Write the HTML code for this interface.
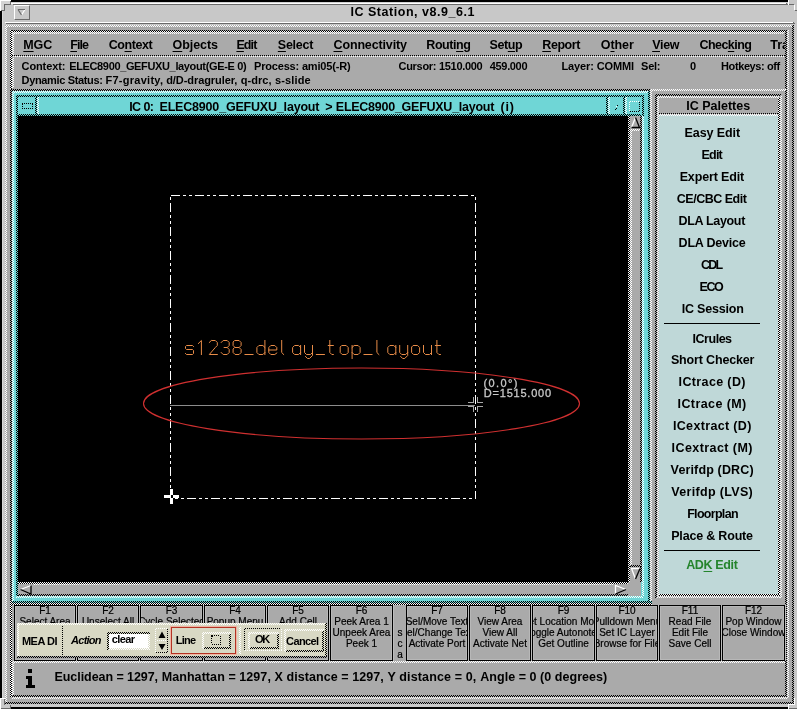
<!DOCTYPE html>
<html><head><meta charset="utf-8">
<style>
html,body{margin:0;padding:0;}
body{width:797px;height:709px;position:relative;overflow:hidden;background:#aaaaaa;font-family:"Liberation Sans",sans-serif;}
div{position:absolute;box-sizing:border-box;}
.t{white-space:nowrap;}
.fk{-webkit-text-stroke:0.2px #000;position:absolute;left:-20px;right:-20px;text-align:center;white-space:nowrap;font-size:10px;line-height:11px;color:#000;}
u{text-decoration:underline;text-underline-offset:2px;}
</style></head><body><div style="left:0;top:0;width:797px;height:709px;overflow:hidden;will-change:transform;">
<div style="left:0px;top:0px;width:797px;height:26px;background:#c8c8c8;"></div>
<div style="left:794px;top:0px;width:3px;height:709px;background:#c8c8c8;"></div>
<div style="left:2px;top:0px;width:3px;height:709px;background:#c8c8c8;"></div>
<div style="left:0px;top:11px;width:2px;height:687px;background:#000;"></div>
<div style="left:2px;top:11px;width:1px;height:687px;background:#d8d8d8;"></div>
<div style="left:11px;top:0px;width:777px;height:2px;background:#000;"></div>
<div style="left:0px;top:0px;width:11px;height:11px;background:#c8c8c8;"></div>
<div style="left:1px;top:1px;width:10px;height:3px;background:#d4d4d4;"></div>
<div style="left:1px;top:1px;width:3px;height:10px;background:#d4d4d4;"></div>
<div style="left:0px;top:0px;width:11px;height:1px;background:#fff;"></div>
<div style="left:0px;top:0px;width:1px;height:11px;background:#fff;"></div>
<div style="left:10px;top:1px;width:1px;height:4px;background:#6a6a6a;"></div>
<div style="left:4px;top:4px;width:7px;height:1px;background:#6a6a6a;"></div>
<div style="left:4px;top:4px;width:1px;height:7px;background:#6a6a6a;"></div>
<div style="left:1px;top:10px;width:4px;height:1px;background:#6a6a6a;"></div>
<div style="left:788px;top:0px;width:9px;height:10px;background:#c8c8c8;"></div>
<div style="left:788px;top:0px;width:1px;height:5px;background:#fff;"></div>
<div style="left:789px;top:4px;width:5px;height:1px;background:#6a6a6a;"></div>
<div style="left:794px;top:5px;width:1px;height:5px;background:#fff;"></div>
<div style="left:795px;top:10px;width:2px;height:1px;background:#6a6a6a;"></div>
<div style="left:11px;top:2px;width:777px;height:1px;background:#d4d4d4;"></div>
<div style="left:11px;top:3px;width:775px;height:1px;background:#fff;"></div>
<div style="left:13px;top:4px;width:775px;height:1px;background:#6a6a6a;"></div>
<div style="left:786px;top:3px;width:1px;height:1px;background:#6a6a6a;"></div>
<div style="left:5px;top:22px;width:788px;height:1px;background:#fff;"></div>
<div style="left:6px;top:23px;width:789px;height:1px;background:#6a6a6a;"></div>
<div style="left:793px;top:22px;width:1px;height:1px;background:#6a6a6a;"></div>
<div class="t" style="left:350.40px;top:1.67px;font-size:12.5px;line-height:20px;font-weight:bold;font-style:normal;color:#000;font-family:'Liberation Sans';letter-spacing:0.538px;">IC Station, v8.9_6.1</div>
<div style="left:14px;top:5px;width:16px;height:15px;background:#c8c8c8;border-left:1px solid #fff;border-top:1px solid #fff;border-right:1px solid #6a6a6a;border-bottom:1px solid #6a6a6a;"></div>
<svg style="position:absolute;left:16px;top:8px" width="12" height="10"><path d="M9 1.5 L5.5 7" stroke="#fff" stroke-width="1.2"/><path d="M2 1.5 H9 M2 1.5 L5.5 7" fill="none" stroke="#6a6a6a" stroke-width="1.2"/></svg>
<div style="left:5px;top:25px;width:787px;height:2px;background:repeating-conic-gradient(#fff 0 25%,#aaaaaa 0 50%) 0 0/2px 2px;"></div>
<div style="left:5px;top:25px;width:2px;height:679px;background:repeating-conic-gradient(#fff 0 25%,#aaaaaa 0 50%) 0 0/2px 2px;"></div>
<div style="left:792px;top:25px;width:2px;height:679px;background:repeating-conic-gradient(#000 0 25%,#aaaaaa 0 50%) 0 0/2px 2px;"></div>
<div style="left:5px;top:702px;width:789px;height:2px;background:repeating-conic-gradient(#000 0 25%,#aaaaaa 0 50%) 0 0/2px 2px;"></div>
<div style="left:5px;top:704px;width:792px;height:3px;background:#c8c8c8;"></div>
<div style="left:11px;top:707px;width:777px;height:2px;background:#000;"></div>
<div style="left:0px;top:698px;width:5px;height:11px;background:#c8c8c8;"></div>
<div style="left:0px;top:704px;width:11px;height:5px;background:#c8c8c8;"></div>
<div style="left:0px;top:698px;width:5px;height:1px;background:#fff;"></div>
<div style="left:0px;top:698px;width:1px;height:11px;background:#fff;"></div>
<div style="left:4px;top:699px;width:1px;height:6px;background:#6a6a6a;"></div>
<div style="left:10px;top:705px;width:1px;height:4px;background:#6a6a6a;"></div>
<div style="left:1px;top:708px;width:10px;height:1px;background:#6a6a6a;"></div>
<div style="left:788px;top:704px;width:9px;height:5px;background:#c8c8c8;"></div>
<div style="left:794px;top:698px;width:1px;height:7px;background:#fff;"></div>
<div style="left:788px;top:704px;width:7px;height:1px;background:#fff;"></div>
<div style="left:788px;top:704px;width:1px;height:5px;background:#fff;"></div>
<div style="left:789px;top:708px;width:8px;height:1px;background:#6a6a6a;"></div>
<div style="left:785px;top:30px;width:2px;height:668px;background:repeating-conic-gradient(#000 0 25%,#aaaaaa 0 50%) 0 0/2px 2px;"></div>
<div style="left:787px;top:30px;width:2px;height:668px;background:repeating-conic-gradient(#fff 0 25%,#aaaaaa 0 50%) 0 0/2px 2px;"></div>
<div style="left:10px;top:30px;width:776px;height:1px;background:linear-gradient(to right,#000 50%,#aaa 50%) 0 0/2px 1px;"></div>
<div style="left:10px;top:31px;width:776px;height:1px;background:linear-gradient(to right,#fff 50%,#000 50%) 0 0/2px 1px;"></div>
<div style="left:12px;top:32px;width:772px;height:2px;background:repeating-conic-gradient(#fff 0 25%,#aaaaaa 0 50%) 0 0/2px 2px;"></div>
<div style="left:10px;top:30px;width:2px;height:28px;background:repeating-conic-gradient(#000 0 25%,#fff 0 50%) 0 0/2px 2px;"></div>
<div style="left:12px;top:32px;width:2px;height:24px;background:repeating-conic-gradient(#fff 0 25%,#aaaaaa 0 50%) 0 0/2px 2px;"></div>
<div style="left:12px;top:55px;width:773px;height:1px;background:linear-gradient(to right,#000 50%,#aaa 50%) 0 0/2px 1px;"></div>
<div style="left:12px;top:56px;width:773px;height:1px;background:linear-gradient(to right,#aaa 50%,#fff 50%) 0 0/2px 1px;"></div>
<div class="t" style="left:23.30px;top:34.67px;font-size:12.5px;line-height:20px;font-weight:bold;font-style:normal;color:#000;font-family:'Liberation Sans';letter-spacing:-0.118px;"><u>M</u>GC</div>
<div class="t" style="left:70.30px;top:34.67px;font-size:12.5px;line-height:20px;font-weight:bold;font-style:normal;color:#000;font-family:'Liberation Sans';letter-spacing:-0.960px;"><u>F</u>ile</div>
<div class="t" style="left:108.70px;top:34.67px;font-size:12.5px;line-height:20px;font-weight:bold;font-style:normal;color:#000;font-family:'Liberation Sans';letter-spacing:-0.411px;">Co<u>n</u>text</div>
<div class="t" style="left:172.60px;top:34.67px;font-size:12.5px;line-height:20px;font-weight:bold;font-style:normal;color:#000;font-family:'Liberation Sans';letter-spacing:-0.083px;"><u>O</u>bjects</div>
<div class="t" style="left:236.40px;top:34.67px;font-size:12.5px;line-height:20px;font-weight:bold;font-style:normal;color:#000;font-family:'Liberation Sans';letter-spacing:-0.882px;"><u>E</u>dit</div>
<div class="t" style="left:277.80px;top:34.67px;font-size:12.5px;line-height:20px;font-weight:bold;font-style:normal;color:#000;font-family:'Liberation Sans';letter-spacing:-0.253px;"><u>S</u>elect</div>
<div class="t" style="left:333.50px;top:34.67px;font-size:12.5px;line-height:20px;font-weight:bold;font-style:normal;color:#000;font-family:'Liberation Sans';letter-spacing:-0.142px;"><u>C</u>onnectivity</div>
<div class="t" style="left:426.30px;top:34.67px;font-size:12.5px;line-height:20px;font-weight:bold;font-style:normal;color:#000;font-family:'Liberation Sans';letter-spacing:-0.428px;">Routi<u>n</u>g</div>
<div class="t" style="left:489.60px;top:34.67px;font-size:12.5px;line-height:20px;font-weight:bold;font-style:normal;color:#000;font-family:'Liberation Sans';letter-spacing:-0.422px;">Set<u>u</u>p</div>
<div class="t" style="left:542.30px;top:34.67px;font-size:12.5px;line-height:20px;font-weight:bold;font-style:normal;color:#000;font-family:'Liberation Sans';letter-spacing:-0.443px;"><u>R</u>eport</div>
<div class="t" style="left:600.80px;top:34.67px;font-size:12.5px;line-height:20px;font-weight:bold;font-style:normal;color:#000;font-family:'Liberation Sans';letter-spacing:-0.093px;">O<u>t</u>her</div>
<div class="t" style="left:652.20px;top:34.67px;font-size:12.5px;line-height:20px;font-weight:bold;font-style:normal;color:#000;font-family:'Liberation Sans';letter-spacing:-0.312px;"><u>V</u>iew</div>
<div class="t" style="left:699.40px;top:34.67px;font-size:12.5px;line-height:20px;font-weight:bold;font-style:normal;color:#000;font-family:'Liberation Sans';letter-spacing:-0.532px;">Chec<u>k</u>ing</div>
<div style="left:770px;top:34px;width:15px;height:20px;overflow:hidden;">
<div class="t" style="left:0.30px;top:0.67px;font-size:12.5px;line-height:20px;font-weight:bold;font-style:normal;color:#000;font-family:'Liberation Sans';letter-spacing:0.000px;">Tra</div>
</div>
<div style="left:10px;top:58px;width:2px;height:32px;background:repeating-conic-gradient(#000 0 25%,#fff 0 50%) 0 0/2px 2px;"></div>
<div style="left:12px;top:58px;width:2px;height:30px;background:repeating-conic-gradient(#fff 0 25%,#aaaaaa 0 50%) 0 0/2px 2px;"></div>
<div class="t" style="left:21.60px;top:56.19px;font-size:11px;line-height:20px;font-weight:bold;font-style:normal;color:#000;font-family:'Liberation Sans';letter-spacing:-0.121px;">Context:</div>
<div class="t" style="left:69.20px;top:56.19px;font-size:11px;line-height:20px;font-weight:bold;font-style:normal;color:#000;font-family:'Liberation Sans';letter-spacing:-0.355px;">ELEC8900_GEFUXU_layout(GE-E 0)</div>
<div class="t" style="left:254.00px;top:56.19px;font-size:11px;line-height:20px;font-weight:bold;font-style:normal;color:#000;font-family:'Liberation Sans';letter-spacing:-0.182px;">Process: ami05(-R)</div>
<div class="t" style="left:398.50px;top:56.19px;font-size:11px;line-height:20px;font-weight:bold;font-style:normal;color:#000;font-family:'Liberation Sans';letter-spacing:-0.296px;">Cursor: 1510.000</div>
<div class="t" style="left:489.80px;top:56.19px;font-size:11px;line-height:20px;font-weight:bold;font-style:normal;color:#000;font-family:'Liberation Sans';letter-spacing:-0.341px;">459.000</div>
<div class="t" style="left:561.50px;top:56.19px;font-size:11px;line-height:20px;font-weight:bold;font-style:normal;color:#000;font-family:'Liberation Sans';letter-spacing:-0.127px;">Layer: COMMI</div>
<div class="t" style="left:641.10px;top:56.19px;font-size:11px;line-height:20px;font-weight:bold;font-style:normal;color:#000;font-family:'Liberation Sans';letter-spacing:-0.304px;">Sel:</div>
<div class="t" style="left:690.00px;top:56.19px;font-size:11px;line-height:20px;font-weight:bold;font-style:normal;color:#000;font-family:'Liberation Sans';letter-spacing:0.000px;">0</div>
<div class="t" style="left:721.00px;top:56.19px;font-size:11px;line-height:20px;font-weight:bold;font-style:normal;color:#000;font-family:'Liberation Sans';letter-spacing:-0.391px;">Hotkeys: off</div>
<div class="t" style="left:21.60px;top:70.19px;font-size:11px;line-height:20px;font-weight:bold;font-style:normal;color:#000;font-family:'Liberation Sans';letter-spacing:-0.352px;">Dynamic Status:</div>
<div class="t" style="left:105.50px;top:70.19px;font-size:11px;line-height:20px;font-weight:bold;font-style:normal;color:#000;font-family:'Liberation Sans';letter-spacing:0.264px;">F7-gravity,</div>
<div class="t" style="left:166.20px;top:70.19px;font-size:11px;line-height:20px;font-weight:bold;font-style:normal;color:#000;font-family:'Liberation Sans';letter-spacing:-0.074px;">d/D-dragruler,</div>
<div class="t" style="left:240.70px;top:70.19px;font-size:11px;line-height:20px;font-weight:bold;font-style:normal;color:#000;font-family:'Liberation Sans';letter-spacing:0.040px;">q-drc,</div>
<div class="t" style="left:274.90px;top:70.19px;font-size:11px;line-height:20px;font-weight:bold;font-style:normal;color:#000;font-family:'Liberation Sans';letter-spacing:0.162px;">s-slide</div>
<div style="left:10px;top:89px;width:640px;height:2px;background:repeating-conic-gradient(#000 0 25%,#aaaaaa 0 50%) 0 0/2px 2px;"></div>
<div style="left:650px;top:89px;width:136px;height:2px;background:repeating-conic-gradient(#fff 0 25%,#aaaaaa 0 50%) 0 0/2px 2px;"></div>
<div style="left:10px;top:91px;width:642px;height:512px;background:#6fd6d6;"></div>
<div style="left:10px;top:91px;width:2px;height:512px;background:repeating-conic-gradient(#000 0 25%,#aaaaaa 0 50%) 0 0/2px 2px;"></div>
<div style="left:12px;top:91px;width:638px;height:2px;background:repeating-conic-gradient(#fff 0 25%,#6fd6d6 0 50%) 0 0/2px 2px;"></div>
<div style="left:12px;top:91px;width:2px;height:510px;background:repeating-conic-gradient(#fff 0 25%,#6fd6d6 0 50%) 0 0/2px 2px;"></div>
<div style="left:648px;top:91px;width:2px;height:512px;background:repeating-conic-gradient(#000 0 25%,#6fd6d6 0 50%) 0 0/2px 2px;"></div>
<div style="left:650px;top:91px;width:2px;height:512px;background:repeating-conic-gradient(#fff 0 25%,#aaaaaa 0 50%) 0 0/2px 2px;"></div>
<div style="left:16px;top:95px;width:627px;height:2px;background:repeating-conic-gradient(#000 0 25%,#6fd6d6 0 50%) 0 0/2px 2px;"></div>
<div style="left:16px;top:95px;width:2px;height:502px;background:repeating-conic-gradient(#000 0 25%,#6fd6d6 0 50%) 0 0/2px 2px;"></div>
<div style="left:642px;top:95px;width:2px;height:502px;background:repeating-conic-gradient(#fff 0 25%,#6fd6d6 0 50%) 0 0/2px 2px;"></div>
<div style="left:18px;top:114px;width:623px;height:2px;background:repeating-conic-gradient(#000 0 25%,#6fd6d6 0 50%) 0 0/2px 2px;"></div>
<div style="left:35px;top:97px;width:2px;height:17px;background:repeating-conic-gradient(#000 0 25%,#6fd6d6 0 50%) 0 0/2px 2px;"></div>
<div style="left:37px;top:97px;width:2px;height:17px;background:repeating-conic-gradient(#fff 0 25%,#6fd6d6 0 50%) 0 0/2px 2px;"></div>
<div style="left:22px;top:103px;width:11px;height:6px;border:1px dotted #000;"></div>
<div class="t" style="left:129.20px;top:96.67px;font-size:12.5px;line-height:20px;font-weight:bold;font-style:normal;color:#000;font-family:'Liberation Sans';letter-spacing:-0.581px;">IC 0:</div>
<div class="t" style="left:159.50px;top:96.67px;font-size:12.5px;line-height:20px;font-weight:bold;font-style:normal;color:#000;font-family:'Liberation Sans';letter-spacing:-0.190px;">ELEC8900_GEFUXU_layout</div>
<div class="t" style="left:325.30px;top:96.67px;font-size:12.5px;line-height:20px;font-weight:bold;font-style:normal;color:#000;font-family:'Liberation Sans';letter-spacing:0.000px;">&gt;</div>
<div class="t" style="left:335.80px;top:96.67px;font-size:12.5px;line-height:20px;font-weight:bold;font-style:normal;color:#000;font-family:'Liberation Sans';letter-spacing:-0.256px;">ELEC8900_GEFUXU_layout</div>
<div class="t" style="left:500.50px;top:96.67px;font-size:12.5px;line-height:20px;font-weight:bold;font-style:normal;color:#000;font-family:'Liberation Sans';letter-spacing:0.782px;">(i)</div>
<div style="left:606px;top:97px;width:2px;height:17px;background:repeating-conic-gradient(#000 0 25%,#6fd6d6 0 50%) 0 0/2px 2px;"></div>
<div style="left:608px;top:97px;width:2px;height:17px;background:repeating-conic-gradient(#fff 0 25%,#6fd6d6 0 50%) 0 0/2px 2px;"></div>
<div style="left:623px;top:97px;width:2px;height:17px;background:repeating-conic-gradient(#000 0 25%,#6fd6d6 0 50%) 0 0/2px 2px;"></div>
<div style="left:625px;top:97px;width:2px;height:17px;background:repeating-conic-gradient(#fff 0 25%,#6fd6d6 0 50%) 0 0/2px 2px;"></div>
<div style="left:642px;top:95px;width:2px;height:21px;background:repeating-conic-gradient(#000 0 25%,#6fd6d6 0 50%) 0 0/2px 2px;"></div>
<div style="left:617px;top:105px;width:1px;height:1px;background:#000;"></div>
<div style="left:616px;top:106px;width:1px;height:1px;background:#fff;"></div>
<div style="left:616px;top:108px;width:1px;height:1px;background:#000;"></div>
<div style="left:615px;top:109px;width:1px;height:1px;background:#000;"></div>
<div style="left:629px;top:101px;width:11px;height:1px;background:repeating-conic-gradient(#fff 0 25%,#6fd6d6 0 50%) 0 0/2px 2px;"></div>
<div style="left:629px;top:101px;width:1px;height:11px;background:repeating-conic-gradient(#fff 0 25%,#6fd6d6 0 50%) 0 0/2px 2px;"></div>
<div style="left:639px;top:101px;width:1px;height:11px;background:repeating-conic-gradient(#000 0 25%,#6fd6d6 0 50%) 0 0/2px 2px;"></div>
<div style="left:629px;top:111px;width:11px;height:1px;background:repeating-conic-gradient(#000 0 25%,#6fd6d6 0 50%) 0 0/2px 2px;"></div>
<div style="left:18px;top:116px;width:610px;height:466px;background:#000;"></div>
<div style="left:628px;top:116px;width:14px;height:466px;background:#aaaaaa;"></div>
<div style="left:628px;top:116px;width:2px;height:466px;background:repeating-conic-gradient(#000 0 25%,#fff 0 50%) 0 0/2px 2px;"></div>
<div style="left:630px;top:129px;width:2px;height:438px;background:repeating-conic-gradient(#fff 0 25%,#aaaaaa 0 50%) 0 0/2px 2px;"></div>
<div style="left:630px;top:129px;width:11px;height:2px;background:repeating-conic-gradient(#fff 0 25%,#aaaaaa 0 50%) 0 0/2px 2px;"></div>
<div style="left:640px;top:116px;width:2px;height:466px;background:repeating-conic-gradient(#000 0 25%,#aaaaaa 0 50%) 0 0/2px 2px;"></div>
<div style="left:630px;top:565px;width:11px;height:2px;background:repeating-conic-gradient(#000 0 25%,#aaaaaa 0 50%) 0 0/2px 2px;"></div>
<svg style="position:absolute;left:630px;top:116px" width="12" height="14"><path d="M5.5 1.5 L1.5 11.5" stroke="#fff" stroke-width="1.3"/><path d="M5.5 1.5 L9.5 11.5 H1.5" fill="none" stroke="#000" stroke-width="1.3"/></svg>
<svg style="position:absolute;left:630px;top:567px" width="12" height="14"><path d="M10 1.5 H1.5 L5.5 12" fill="none" stroke="#fff" stroke-width="1.3"/><path d="M10 1.5 L5.5 12" stroke="#000" stroke-width="1.3"/></svg>
<div style="left:18px;top:582px;width:623px;height:14px;background:#aaaaaa;"></div>
<div style="left:18px;top:582px;width:610px;height:2px;background:repeating-conic-gradient(#000 0 25%,#fff 0 50%) 0 0/2px 2px;"></div>
<div style="left:33px;top:584px;width:580px;height:1px;background:repeating-conic-gradient(#fff 0 25%,#aaaaaa 0 50%) 0 0/2px 2px;"></div>
<div style="left:18px;top:594px;width:610px;height:2px;background:repeating-conic-gradient(#000 0 25%,#aaaaaa 0 50%) 0 0/2px 2px;"></div>
<div style="left:16px;top:596px;width:627px;height:2px;background:repeating-conic-gradient(#fff 0 25%,#6fd6d6 0 50%) 0 0/2px 2px;"></div>
<svg style="position:absolute;left:19px;top:584px" width="14" height="12"><path d="M1.5 5.5 L12 1.5" stroke="#fff" stroke-width="1.3"/><path d="M1.5 5.5 L12 10 V1.5" fill="none" stroke="#000" stroke-width="1.3"/></svg>
<svg style="position:absolute;left:614px;top:584px" width="14" height="12"><path d="M1.5 10 V1.5 L12 5.5" fill="none" stroke="#fff" stroke-width="1.3"/><path d="M12 5.5 L1.5 10" stroke="#000" stroke-width="1.3"/></svg>
<svg style="position:absolute;left:0;top:0" width="797" height="709">
<rect x="170.5" y="195.5" width="305" height="303" fill="none" stroke="#fff" stroke-width="1" stroke-dasharray="9 3 3 3 3 3" shape-rendering="crispEdges"/>
<ellipse cx="361.5" cy="403.5" rx="218" ry="35.5" fill="none" stroke="#d03030" stroke-width="1.1"/>
<line x1="170" y1="405.5" x2="475" y2="405.5" stroke="#8c8c8c" stroke-width="1" shape-rendering="crispEdges"/>
<g stroke="#a8a8a8" stroke-width="1" fill="none" shape-rendering="crispEdges">
<path d="M468 402.5 H473.5 V397 M477.5 397 V402.5 H483 M468 406.5 H473.5 V412 M477.5 412 V406.5 H483"/>
</g>
<g fill="#fff">
<rect x="164" y="495" width="6" height="3"/><rect x="173" y="495" width="6" height="3"/>
<rect x="170" y="489" width="3" height="6"/><rect x="170" y="498" width="3" height="6"/>
</g>
</svg>
<svg style="position:absolute;left:0;top:0" width="797" height="709"><g fill="none" stroke="#e88c48" stroke-width="1.0" stroke-linejoin="round" stroke-linecap="square"><path transform="translate(185.50 340.5)" d="M8 6 L7 5 H1 L0 6 V8 L1 9 H7 L8 10 V13 L7 14 H1 L0 13"/><path transform="translate(197.40 340.5)" d="M1 3 L4 0 V14"/><path transform="translate(209.30 340.5)" d="M0 2 L2 0 H6 L8 2 V5 L6 7 L0 14 H8"/><path transform="translate(221.20 340.5)" d="M0 2 L2 0 H6 L8 2 V5 L6 7 H3 M6 7 L8 9 V12 L6 14 H2 L0 12"/><path transform="translate(233.10 340.5)" d="M2 0 H6 L8 2 V5 L6 7 H2 L0 5 V2 Z M2 7 H6 L8 9 V12 L6 14 H2 L0 12 V9 Z"/><path transform="translate(245.00 340.5)" d="M0 14 H8"/><path transform="translate(256.90 340.5)" d="M8 0 V14 M8 7 L6 5 H2 L0 7 V12 L2 14 H6 L8 12"/><path transform="translate(268.80 340.5)" d="M0 9.5 H8 V7 L6 5 H2 L0 7 V12 L2 14 H6 L8 12.5"/><path transform="translate(280.70 340.5)" d="M1 0 V12 L3 14"/><path transform="translate(292.60 340.5)" d="M8 5 V14 M8 7 L6 5 H2 L0 7 V12 L2 14 H6 L8 12"/><path transform="translate(304.50 340.5)" d="M0 5 V12 L2 14 H6 L8 12 M8 5 V15 L5 18 H3 L1 16"/><path transform="translate(316.40 340.5)" d="M0 14 H8"/><path transform="translate(328.30 340.5)" d="M1.5 0 V12 L3.5 14 H5 M0 5 H5"/><path transform="translate(340.20 340.5)" d="M2 5 H6 L8 7 V12 L6 14 H2 L0 12 V7 Z"/><path transform="translate(352.10 340.5)" d="M0 5 V18 M0 7 L2 5 H6 L8 7 V12 L6 14 H2 L0 12"/><path transform="translate(364.00 340.5)" d="M0 14 H8"/><path transform="translate(375.90 340.5)" d="M1 0 V12 L3 14"/><path transform="translate(387.80 340.5)" d="M8 5 V14 M8 7 L6 5 H2 L0 7 V12 L2 14 H6 L8 12"/><path transform="translate(399.70 340.5)" d="M0 5 V12 L2 14 H6 L8 12 M8 5 V15 L5 18 H3 L1 16"/><path transform="translate(411.60 340.5)" d="M2 5 H6 L8 7 V12 L6 14 H2 L0 12 V7 Z"/><path transform="translate(423.50 340.5)" d="M0 5 V12 L2 14 H6 L8 12 M8 5 V14"/><path transform="translate(435.40 340.5)" d="M1.5 0 V12 L3.5 14 H5 M0 5 H5"/></g></svg>
<div class="t" style="left:483.50px;top:373.19px;font-size:11px;line-height:20px;font-weight:normal;font-style:normal;color:#c8c8c8;font-family:'Liberation Sans';letter-spacing:1.389px;-webkit-text-stroke:0.3px #c8c8c8;">(0.0&deg;)</div>
<div class="t" style="left:483.80px;top:383.19px;font-size:11px;line-height:20px;font-weight:normal;font-style:normal;color:#c8c8c8;font-family:'Liberation Sans';letter-spacing:0.786px;-webkit-text-stroke:0.3px #c8c8c8;">D=1515.000</div>
<div style="left:655px;top:94px;width:130px;height:506px;background:#aaaaaa;"></div>
<div style="left:655px;top:94px;width:126px;height:2px;background:repeating-conic-gradient(#000 0 25%,#aaaaaa 0 50%) 0 0/2px 2px;"></div>
<div style="left:655px;top:94px;width:2px;height:504px;background:repeating-conic-gradient(#000 0 25%,#aaaaaa 0 50%) 0 0/2px 2px;"></div>
<div style="left:657px;top:96px;width:122px;height:2px;background:repeating-conic-gradient(#fff 0 25%,#aaaaaa 0 50%) 0 0/2px 2px;"></div>
<div style="left:657px;top:96px;width:2px;height:500px;background:repeating-conic-gradient(#fff 0 25%,#aaaaaa 0 50%) 0 0/2px 2px;"></div>
<div style="left:659px;top:113px;width:119px;height:1px;background:linear-gradient(to right,#000 50%,#aaa 50%) 0 0/2px 1px;"></div>
<div style="left:659px;top:114px;width:119px;height:1px;background:linear-gradient(to right,#aaa 50%,#fff 50%) 0 0/2px 1px;"></div>
<div style="left:659px;top:115px;width:119px;height:1px;background:linear-gradient(to right,#fff 50%,#bfd8d8 50%) 0 0/2px 1px;"></div>
<div style="left:659px;top:116px;width:119px;height:478px;background:#bfd8d8;"></div>
<div style="left:778px;top:98px;width:2px;height:498px;background:repeating-conic-gradient(#000 0 25%,#fff 0 50%) 0 0/2px 2px;"></div>
<div style="left:659px;top:594px;width:121px;height:2px;background:repeating-conic-gradient(#000 0 25%,#fff 0 50%) 0 0/2px 2px;"></div>
<div style="left:657px;top:596px;width:123px;height:2px;background:repeating-conic-gradient(#fff 0 25%,#aaaaaa 0 50%) 0 0/2px 2px;"></div>
<div style="left:780px;top:96px;width:2px;height:502px;background:repeating-conic-gradient(#fff 0 25%,#aaaaaa 0 50%) 0 0/2px 2px;"></div>
<div class="t" style="left:686.30px;top:95.67px;font-size:12.5px;line-height:20px;font-weight:bold;font-style:normal;color:#000;font-family:'Liberation Sans';letter-spacing:-0.006px;">IC Palettes</div>
<div class="t" style="left:684.50px;top:122.67px;font-size:12.5px;line-height:20px;font-weight:bold;font-style:normal;color:#000;font-family:'Liberation Sans';letter-spacing:-0.076px;">Easy Edit</div>
<div class="t" style="left:701.60px;top:144.67px;font-size:12.5px;line-height:20px;font-weight:bold;font-style:normal;color:#000;font-family:'Liberation Sans';letter-spacing:-0.815px;">Edit</div>
<div class="t" style="left:679.70px;top:166.67px;font-size:12.5px;line-height:20px;font-weight:bold;font-style:normal;color:#000;font-family:'Liberation Sans';letter-spacing:-0.152px;">Expert Edit</div>
<div class="t" style="left:676.80px;top:188.67px;font-size:12.5px;line-height:20px;font-weight:bold;font-style:normal;color:#000;font-family:'Liberation Sans';letter-spacing:-0.494px;">CE/CBC Edit</div>
<div class="t" style="left:678.60px;top:210.67px;font-size:12.5px;line-height:20px;font-weight:bold;font-style:normal;color:#000;font-family:'Liberation Sans';letter-spacing:-0.330px;">DLA Layout</div>
<div class="t" style="left:678.60px;top:232.67px;font-size:12.5px;line-height:20px;font-weight:bold;font-style:normal;color:#000;font-family:'Liberation Sans';letter-spacing:-0.224px;">DLA Device</div>
<div class="t" style="left:701.10px;top:254.67px;font-size:12.5px;line-height:20px;font-weight:bold;font-style:normal;color:#000;font-family:'Liberation Sans';letter-spacing:-1.777px;">CDL</div>
<div class="t" style="left:699.60px;top:276.67px;font-size:12.5px;line-height:20px;font-weight:bold;font-style:normal;color:#000;font-family:'Liberation Sans';letter-spacing:-1.432px;">ECO</div>
<div class="t" style="left:681.70px;top:298.67px;font-size:12.5px;line-height:20px;font-weight:bold;font-style:normal;color:#000;font-family:'Liberation Sans';letter-spacing:-0.186px;">IC Session</div>
<div style="left:664px;top:323px;width:96px;height:1px;background:#000;"></div>
<div class="t" style="left:692.60px;top:328.67px;font-size:12.5px;line-height:20px;font-weight:bold;font-style:normal;color:#000;font-family:'Liberation Sans';letter-spacing:-0.487px;">ICrules</div>
<div class="t" style="left:670.90px;top:349.67px;font-size:12.5px;line-height:20px;font-weight:bold;font-style:normal;color:#000;font-family:'Liberation Sans';letter-spacing:-0.157px;">Short Checker</div>
<div class="t" style="left:678.60px;top:371.67px;font-size:12.5px;line-height:20px;font-weight:bold;font-style:normal;color:#000;font-family:'Liberation Sans';letter-spacing:0.365px;">ICtrace (D)</div>
<div class="t" style="left:677.50px;top:393.67px;font-size:12.5px;line-height:20px;font-weight:bold;font-style:normal;color:#000;font-family:'Liberation Sans';letter-spacing:0.417px;">ICtrace (M)</div>
<div class="t" style="left:672.90px;top:415.67px;font-size:12.5px;line-height:20px;font-weight:bold;font-style:normal;color:#000;font-family:'Liberation Sans';letter-spacing:0.345px;">ICextract (D)</div>
<div class="t" style="left:671.60px;top:437.67px;font-size:12.5px;line-height:20px;font-weight:bold;font-style:normal;color:#000;font-family:'Liberation Sans';letter-spacing:0.430px;">ICextract (M)</div>
<div class="t" style="left:670.60px;top:459.67px;font-size:12.5px;line-height:20px;font-weight:bold;font-style:normal;color:#000;font-family:'Liberation Sans';letter-spacing:0.143px;">Verifdp (DRC)</div>
<div class="t" style="left:671.30px;top:481.67px;font-size:12.5px;line-height:20px;font-weight:bold;font-style:normal;color:#000;font-family:'Liberation Sans';letter-spacing:0.326px;">Verifdp (LVS)</div>
<div class="t" style="left:687.20px;top:503.67px;font-size:12.5px;line-height:20px;font-weight:bold;font-style:normal;color:#000;font-family:'Liberation Sans';letter-spacing:-0.701px;">Floorplan</div>
<div class="t" style="left:671.20px;top:525.67px;font-size:12.5px;line-height:20px;font-weight:bold;font-style:normal;color:#000;font-family:'Liberation Sans';letter-spacing:-0.183px;">Place &amp; Route</div>
<div style="left:664px;top:550px;width:96px;height:1px;background:#000;"></div>
<div class="t" style="left:686.20px;top:554.67px;font-size:12.5px;line-height:20px;font-weight:bold;font-style:normal;color:#24842c;font-family:'Liberation Sans';letter-spacing:-0.357px;">AD<u>K</u> Edit</div>
<div style="left:12px;top:603px;width:773px;height:58px;background:#aaaaaa;"></div>
<div style="left:10px;top:601px;width:642px;height:2px;background:repeating-conic-gradient(#000 0 25%,#6fd6d6 0 50%) 0 0/2px 2px;"></div>
<div style="left:10px;top:603px;width:642px;height:2px;background:repeating-conic-gradient(#000 0 25%,#fff 0 50%) 0 0/2px 2px;"></div>
<div style="left:14px;top:605px;width:62px;height:56px;border:1px solid #000;box-shadow:inset 1px 1px 0 #b8b8b8, inset -1px -1px 0 #b8b8b8;"></div>
<div style="left:76px;top:605px;width:1px;height:56px;background:#bdbdbd;"></div>
<div style="left:15px;top:606px;width:60px;height:54px;overflow:hidden;"><div style="left:0;top:-1px;width:60px;height:60px;"><div class="fk" style="top:0px;">F1</div><div class="fk" style="top:11px;">Select Area</div></div></div>
<div style="left:77px;top:605px;width:62px;height:56px;border:1px solid #000;box-shadow:inset 1px 1px 0 #b8b8b8, inset -1px -1px 0 #b8b8b8;"></div>
<div style="left:139px;top:605px;width:1px;height:56px;background:#bdbdbd;"></div>
<div style="left:78px;top:606px;width:60px;height:54px;overflow:hidden;"><div style="left:0;top:-1px;width:60px;height:60px;"><div class="fk" style="top:0px;">F2</div><div class="fk" style="top:11px;">Unselect All</div></div></div>
<div style="left:140px;top:605px;width:63px;height:56px;border:1px solid #000;box-shadow:inset 1px 1px 0 #b8b8b8, inset -1px -1px 0 #b8b8b8;"></div>
<div style="left:203px;top:605px;width:1px;height:56px;background:#bdbdbd;"></div>
<div style="left:141px;top:606px;width:61px;height:54px;overflow:hidden;"><div style="left:0;top:-1px;width:61px;height:60px;"><div class="fk" style="top:0px;">F3</div><div class="fk" style="top:11px;">Cycle Selected</div></div></div>
<div style="left:204px;top:605px;width:62px;height:56px;border:1px solid #000;box-shadow:inset 1px 1px 0 #b8b8b8, inset -1px -1px 0 #b8b8b8;"></div>
<div style="left:266px;top:605px;width:1px;height:56px;background:#bdbdbd;"></div>
<div style="left:205px;top:606px;width:60px;height:54px;overflow:hidden;"><div style="left:0;top:-1px;width:60px;height:60px;"><div class="fk" style="top:0px;">F4</div><div class="fk" style="top:11px;">Popup Menu</div></div></div>
<div style="left:267px;top:605px;width:62px;height:56px;border:1px solid #000;box-shadow:inset 1px 1px 0 #b8b8b8, inset -1px -1px 0 #b8b8b8;"></div>
<div style="left:329px;top:605px;width:1px;height:56px;background:#bdbdbd;"></div>
<div style="left:268px;top:606px;width:60px;height:54px;overflow:hidden;"><div style="left:0;top:-1px;width:60px;height:60px;"><div class="fk" style="top:0px;">F5</div><div class="fk" style="top:11px;">Add Cell</div></div></div>
<div style="left:330px;top:605px;width:63px;height:56px;border:1px solid #000;box-shadow:inset 1px 1px 0 #b8b8b8, inset -1px -1px 0 #b8b8b8;"></div>
<div style="left:393px;top:605px;width:1px;height:56px;background:#bdbdbd;"></div>
<div style="left:331px;top:606px;width:61px;height:54px;overflow:hidden;"><div style="left:0;top:-1px;width:61px;height:60px;"><div class="fk" style="top:0px;">F6</div><div class="fk" style="top:11px;">Peek Area 1</div><div class="fk" style="top:22px;">Unpeek Area</div><div class="fk" style="top:33px;">Peek 1</div></div></div>
<div style="left:406px;top:605px;width:62px;height:56px;border:1px solid #000;box-shadow:inset 1px 1px 0 #b8b8b8, inset -1px -1px 0 #b8b8b8;"></div>
<div style="left:468px;top:605px;width:1px;height:56px;background:#bdbdbd;"></div>
<div style="left:407px;top:606px;width:60px;height:54px;overflow:hidden;"><div style="left:0;top:-1px;width:60px;height:60px;"><div class="fk" style="top:0px;">F7</div><div class="fk" style="top:11px;">Sel/Move Text</div><div class="fk" style="top:22px;">Sel/Change Text</div><div class="fk" style="top:33px;">Activate Port</div></div></div>
<div style="left:469px;top:605px;width:62px;height:56px;border:1px solid #000;box-shadow:inset 1px 1px 0 #b8b8b8, inset -1px -1px 0 #b8b8b8;"></div>
<div style="left:531px;top:605px;width:1px;height:56px;background:#bdbdbd;"></div>
<div style="left:470px;top:606px;width:60px;height:54px;overflow:hidden;"><div style="left:0;top:-1px;width:60px;height:60px;"><div class="fk" style="top:0px;">F8</div><div class="fk" style="top:11px;">View Area</div><div class="fk" style="top:22px;">View All</div><div class="fk" style="top:33px;">Activate Net</div></div></div>
<div style="left:532px;top:605px;width:63px;height:56px;border:1px solid #000;box-shadow:inset 1px 1px 0 #b8b8b8, inset -1px -1px 0 #b8b8b8;"></div>
<div style="left:595px;top:605px;width:1px;height:56px;background:#bdbdbd;"></div>
<div style="left:533px;top:606px;width:61px;height:54px;overflow:hidden;"><div style="left:0;top:-1px;width:61px;height:60px;"><div class="fk" style="top:0px;">F9</div><div class="fk" style="top:11px;">Set Location Mode</div><div class="fk" style="top:22px;">Toggle Autonotes</div><div class="fk" style="top:33px;">Get Outline</div></div></div>
<div style="left:596px;top:605px;width:62px;height:56px;border:1px solid #000;box-shadow:inset 1px 1px 0 #b8b8b8, inset -1px -1px 0 #b8b8b8;"></div>
<div style="left:658px;top:605px;width:1px;height:56px;background:#bdbdbd;"></div>
<div style="left:597px;top:606px;width:60px;height:54px;overflow:hidden;"><div style="left:0;top:-1px;width:60px;height:60px;"><div class="fk" style="top:0px;">F10</div><div class="fk" style="top:11px;">Pulldown Menu</div><div class="fk" style="top:22px;">Set IC Layer</div><div class="fk" style="top:33px;">Browse for File</div></div></div>
<div style="left:659px;top:605px;width:62px;height:56px;border:1px solid #000;box-shadow:inset 1px 1px 0 #b8b8b8, inset -1px -1px 0 #b8b8b8;"></div>
<div style="left:721px;top:605px;width:1px;height:56px;background:#bdbdbd;"></div>
<div style="left:660px;top:606px;width:60px;height:54px;overflow:hidden;"><div style="left:0;top:-1px;width:60px;height:60px;"><div class="fk" style="top:0px;">F11</div><div class="fk" style="top:11px;">Read File</div><div class="fk" style="top:22px;">Edit File</div><div class="fk" style="top:33px;">Save Cell</div></div></div>
<div style="left:722px;top:605px;width:63px;height:56px;border:1px solid #000;box-shadow:inset 1px 1px 0 #b8b8b8, inset -1px -1px 0 #b8b8b8;"></div>
<div style="left:785px;top:605px;width:1px;height:56px;background:#bdbdbd;"></div>
<div style="left:723px;top:606px;width:61px;height:54px;overflow:hidden;"><div style="left:0;top:-1px;width:61px;height:60px;"><div class="fk" style="top:0px;">F12</div><div class="fk" style="top:11px;">Pop Window</div><div class="fk" style="top:22px;">Close Window</div></div></div>
<div style="left:393px;top:606px;width:12px;height:54px;overflow:hidden;"><div style="left:1px;top:-1px;width:12px;height:60px;"><div class="fk" style="top:22px">s</div><div class="fk" style="top:33px">c</div><div class="fk" style="top:44px">a</div></div></div>
<div style="left:17px;top:623px;width:310px;height:34px;background:#d8d8c4;"></div>
<div style="left:17px;top:623px;width:310px;height:2px;background:repeating-conic-gradient(#fff 0 25%,#d8d8c4 0 50%) 0 0/2px 2px;"></div>
<div style="left:17px;top:623px;width:2px;height:34px;background:repeating-conic-gradient(#fff 0 25%,#d8d8c4 0 50%) 0 0/2px 2px;"></div>
<div style="left:325px;top:623px;width:2px;height:34px;background:repeating-conic-gradient(#000 0 25%,#d8d8c4 0 50%) 0 0/2px 2px;"></div>
<div style="left:17px;top:656px;width:310px;height:2px;background:repeating-conic-gradient(#000 0 25%,#aaaaaa 0 50%) 0 0/2px 2px;"></div>
<div style="left:62px;top:625px;width:1px;height:31px;background:repeating-conic-gradient(#000 0 25%,#d8d8c4 0 50%) 0 0/2px 2px;"></div>
<div class="t" style="left:21.90px;top:631.19px;font-size:11px;line-height:20px;font-weight:bold;font-style:normal;color:#000;font-family:'Liberation Sans';letter-spacing:-0.489px;">MEA DI</div>
<div class="t" style="left:71.10px;top:630.19px;font-size:11px;line-height:20px;font-weight:bold;font-style:italic;color:#000;font-family:'Liberation Sans';letter-spacing:-0.760px;">Action</div>
<div style="left:107px;top:632px;width:43px;height:18px;background:#d8d8c4;"></div>
<div style="left:109px;top:634px;width:39px;height:14px;background:#fff;"></div>
<div style="left:107px;top:632px;width:43px;height:2px;background:repeating-conic-gradient(#000 0 25%,#d8d8c4 0 50%) 0 0/2px 2px;"></div>
<div style="left:107px;top:632px;width:2px;height:18px;background:repeating-conic-gradient(#000 0 25%,#d8d8c4 0 50%) 0 0/2px 2px;"></div>
<div style="left:148px;top:634px;width:2px;height:16px;background:repeating-conic-gradient(#fff 0 25%,#d8d8c4 0 50%) 0 0/2px 2px;"></div>
<div style="left:109px;top:648px;width:41px;height:2px;background:repeating-conic-gradient(#fff 0 25%,#d8d8c4 0 50%) 0 0/2px 2px;"></div>
<div class="t" style="left:111.70px;top:629.19px;font-size:11px;line-height:20px;font-weight:bold;font-style:normal;color:#000;font-family:'Liberation Sans';letter-spacing:-0.602px;">clear</div>
<div style="left:155px;top:628px;width:13px;height:25px;background:#d8d8c4;"></div>
<div style="left:155px;top:628px;width:13px;height:1px;background:repeating-conic-gradient(#fff 0 25%,#d8d8c4 0 50%) 0 0/2px 2px;"></div>
<div style="left:155px;top:628px;width:1px;height:25px;background:repeating-conic-gradient(#fff 0 25%,#d8d8c4 0 50%) 0 0/2px 2px;"></div>
<div style="left:167px;top:628px;width:1px;height:25px;background:repeating-conic-gradient(#000 0 25%,#d8d8c4 0 50%) 0 0/2px 2px;"></div>
<div style="left:155px;top:652px;width:13px;height:1px;background:repeating-conic-gradient(#000 0 25%,#d8d8c4 0 50%) 0 0/2px 2px;"></div>
<div style="left:156px;top:640px;width:11px;height:1px;background:repeating-conic-gradient(#fff 0 25%,#d8d8c4 0 50%) 0 0/2px 2px;"></div>
<svg style="position:absolute;left:155px;top:628px" width="13" height="25"><path d="M3.5 10 L7 3.5 L10.5 10 Z M3.5 16 L10.5 16 L7 22 Z" fill="#000"/></svg>
<div style="left:170px;top:626px;width:67px;height:29px;border:1px solid #f0b4a4;"></div>
<div style="left:171px;top:627px;width:65px;height:27px;border:1px solid #b43424;"></div>
<div style="left:239px;top:627px;width:2px;height:27px;background:repeating-conic-gradient(#fff 0 25%,#d8d8c4 0 50%) 0 0/2px 2px;"></div>
<div class="t" style="left:175.70px;top:630.19px;font-size:11px;line-height:20px;font-weight:bold;font-style:normal;color:#000;font-family:'Liberation Sans';letter-spacing:-0.732px;">Line</div>
<div style="left:202px;top:632px;width:29px;height:17px;background:repeating-conic-gradient(#fff 0 25%,#d8d8c4 0 50%) 0 0/2px 2px;"></div>
<div style="left:204px;top:634px;width:25px;height:13px;background:#d8d8c4;"></div>
<div style="left:229px;top:634px;width:2px;height:15px;background:repeating-conic-gradient(#000 0 25%,#d8d8c4 0 50%) 0 0/2px 2px;"></div>
<div style="left:204px;top:647px;width:27px;height:2px;background:repeating-conic-gradient(#000 0 25%,#d8d8c4 0 50%) 0 0/2px 2px;"></div>
<div style="left:211px;top:635px;width:10px;height:1px;background:repeating-conic-gradient(#000 0 25%,#d8d8c4 0 50%) 0 0/2px 2px;"></div>
<div style="left:211px;top:635px;width:1px;height:10px;background:repeating-conic-gradient(#000 0 25%,#d8d8c4 0 50%) 0 0/2px 2px;"></div>
<div style="left:220px;top:635px;width:1px;height:10px;background:repeating-conic-gradient(#000 0 25%,#d8d8c4 0 50%) 0 0/2px 2px;"></div>
<div style="left:211px;top:644px;width:10px;height:1px;background:repeating-conic-gradient(#000 0 25%,#d8d8c4 0 50%) 0 0/2px 2px;"></div>
<div style="left:211px;top:635px;width:2px;height:2px;background:#000;"></div>
<div style="left:244px;top:628px;width:38px;height:1px;background:repeating-conic-gradient(#000 0 25%,#d8d8c4 0 50%) 0 0/2px 2px;"></div>
<div style="left:244px;top:628px;width:1px;height:23px;background:repeating-conic-gradient(#000 0 25%,#d8d8c4 0 50%) 0 0/2px 2px;"></div>
<div style="left:281px;top:628px;width:1px;height:23px;background:repeating-conic-gradient(#fff 0 25%,#d8d8c4 0 50%) 0 0/2px 2px;"></div>
<div style="left:244px;top:650px;width:38px;height:1px;background:repeating-conic-gradient(#fff 0 25%,#d8d8c4 0 50%) 0 0/2px 2px;"></div>
<div style="left:248px;top:632px;width:31px;height:17px;background:repeating-conic-gradient(#fff 0 25%,#d8d8c4 0 50%) 0 0/2px 2px;"></div>
<div style="left:250px;top:634px;width:27px;height:13px;background:#d8d8c4;"></div>
<div style="left:277px;top:634px;width:2px;height:15px;background:repeating-conic-gradient(#000 0 25%,#d8d8c4 0 50%) 0 0/2px 2px;"></div>
<div style="left:250px;top:647px;width:29px;height:2px;background:repeating-conic-gradient(#000 0 25%,#d8d8c4 0 50%) 0 0/2px 2px;"></div>
<div class="t" style="left:254.90px;top:629.19px;font-size:11px;line-height:20px;font-weight:bold;font-style:normal;color:#000;font-family:'Liberation Sans';letter-spacing:-1.256px;">OK</div>
<div style="left:284px;top:629px;width:40px;height:23px;background:repeating-conic-gradient(#fff 0 25%,#d8d8c4 0 50%) 0 0/2px 2px;"></div>
<div style="left:286px;top:631px;width:36px;height:19px;background:#d8d8c4;"></div>
<div style="left:322px;top:631px;width:2px;height:21px;background:repeating-conic-gradient(#000 0 25%,#d8d8c4 0 50%) 0 0/2px 2px;"></div>
<div style="left:286px;top:650px;width:38px;height:2px;background:repeating-conic-gradient(#000 0 25%,#d8d8c4 0 50%) 0 0/2px 2px;"></div>
<div class="t" style="left:286.10px;top:631.19px;font-size:11px;line-height:20px;font-weight:bold;font-style:normal;color:#000;font-family:'Liberation Sans';letter-spacing:-0.603px;">Cancel</div>
<div style="left:12px;top:661px;width:773px;height:2px;background:repeating-conic-gradient(#fff 0 25%,#aaaaaa 0 50%) 0 0/2px 2px;"></div>
<div style="left:10px;top:601px;width:2px;height:96px;background:repeating-conic-gradient(#000 0 25%,#fff 0 50%) 0 0/2px 2px;"></div>
<div style="left:12px;top:663px;width:2px;height:32px;background:repeating-conic-gradient(#fff 0 25%,#aaaaaa 0 50%) 0 0/2px 2px;"></div>
<div style="left:12px;top:695px;width:773px;height:2px;background:repeating-conic-gradient(#000 0 25%,#aaaaaa 0 50%) 0 0/2px 2px;"></div>
<div style="left:12px;top:697px;width:775px;height:2px;background:repeating-conic-gradient(#fff 0 25%,#aaaaaa 0 50%) 0 0/2px 2px;"></div>
<svg style="position:absolute;left:24px;top:668px" width="14" height="22"><g fill="#000"><rect x="4" y="1" width="4" height="4"/><path d="M2 8 H8 V17 H11 V20 H2 V17 H4 V11 H2 Z"/></g></svg>
<div class="t" style="left:54.50px;top:666.67px;font-size:12.5px;line-height:20px;font-weight:bold;font-style:normal;color:#000;font-family:'Liberation Sans';letter-spacing:-0.062px;">Euclidean = 1297,</div>
<div class="t" style="left:161.70px;top:666.67px;font-size:12.5px;line-height:20px;font-weight:bold;font-style:normal;color:#000;font-family:'Liberation Sans';letter-spacing:0.072px;">Manhattan = 1297,</div>
<div class="t" style="left:274.60px;top:666.67px;font-size:12.5px;line-height:20px;font-weight:bold;font-style:normal;color:#000;font-family:'Liberation Sans';letter-spacing:0.066px;">X distance = 1297,</div>
<div class="t" style="left:387.50px;top:666.67px;font-size:12.5px;line-height:20px;font-weight:bold;font-style:normal;color:#000;font-family:'Liberation Sans';letter-spacing:0.127px;">Y distance = 0,</div>
<div class="t" style="left:480.20px;top:666.67px;font-size:12.5px;line-height:20px;font-weight:bold;font-style:normal;color:#000;font-family:'Liberation Sans';letter-spacing:0.049px;">Angle = 0 (0 degrees)</div>
</div></body></html>
